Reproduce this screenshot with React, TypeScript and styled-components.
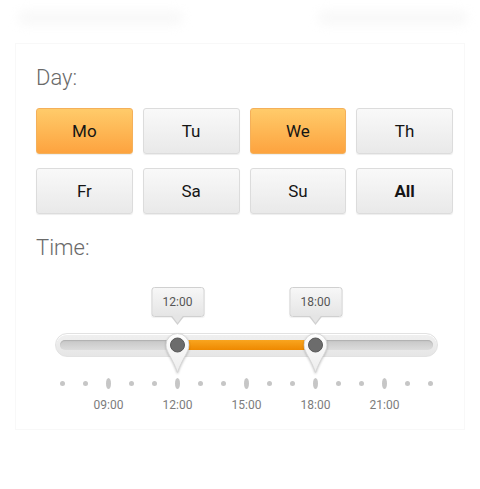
import { FC, useState } from "react";
import styled, { createGlobalStyle, css } from "styled-components";

const GlobalStyle = createGlobalStyle`
  body {
    margin: 0;
    background: #ffffff;
    font-family: Roboto, "Liberation Sans", Arial, sans-serif;
  }
`;

const FIRST_HOUR = 7;
const LAST_HOUR = 23;
const STEP = 23;
const HOURS = Array.from({ length: LAST_HOUR - FIRST_HOUR + 1 }, (_, i) => FIRST_HOUR + i);
const DAYS = ["Mo", "Tu", "We", "Th", "Fr", "Sa", "Su", "All"];

// center of an hour, measured from the left edge of the slider box
const hourX = (h: number) => STEP / 2 + (h - FIRST_HOUR) * STEP;

const Screen = styled.div`
  width: 480px;
  height: 489px;
  overflow: hidden;
  background: #fff;
`;

const Header = styled.div`
  height: 43px;
  box-sizing: border-box;
  padding: 10px 12px 0 18px;
  display: flex;
  justify-content: space-between;
  align-items: flex-start;
`;

const Blur = styled.div<{ $w: number }>`
  width: ${({ $w }) => $w}px;
  height: 16px;
  border-radius: 8px;
  background: #f9f9f9;
  filter: blur(5px);
`;

const Panel = styled.div`
  margin: 0 15px;
  height: 387px;
  box-sizing: border-box;
  border: 1px solid #f8f8f8;
  padding: 21px 20px 0 20px;
`;

const SectionLabel = styled.div<{ $gap?: number }>`
  margin-top: ${({ $gap }) => $gap ?? 0}px;
  font-size: 22px;
  line-height: 26px;
  font-weight: 300;
  color: #6a6a6a;
`;

const DayGrid = styled.div`
  margin-top: 17px;
  width: 417px;
  display: grid;
  grid-template-columns: repeat(4, 1fr);
  gap: 14px 10px;
`;

const DayButton = styled.button<{ $active: boolean; $bold?: boolean }>`
  height: 46px;
  padding: 0;
  border: 1px solid #dcdcdc;
  border-radius: 3px;
  background: linear-gradient(#f9f9f9, #e9e9e9);
  box-shadow: 0 1px 1px rgba(0, 0, 0, 0.07);
  font-family: Roboto, "Liberation Sans", Arial, sans-serif;
  font-size: 17px;
  font-weight: ${({ $bold }) => ($bold ? 700 : 400)};
  color: #151515;
  cursor: pointer;

  ${({ $active }) =>
    $active &&
    css`
      border-color: #f4b05a;
      background: linear-gradient(#ffcb6a, #fda33f);
    `}
`;

const SliderBox = styled.div`
  position: relative;
  margin: 26px 0 0 15px;
  width: ${HOURS.length * STEP}px;
  padding-top: 46px;
`;

const Track = styled.div`
  position: relative;
  margin: 0 4px;
  height: 24px;
  box-sizing: border-box;
  border: 1px solid #e2e2e2;
  border-radius: 12px;
  background: linear-gradient(#f0f0f0, #e6e6e6);
  box-shadow: inset 0 1px 0 #fff;
  padding: 6px 4px;
`;

const Groove = styled.div`
  position: relative;
  height: 10px;
  border-radius: 5px;
  background: linear-gradient(#c6c6c6, #dcdcdc);
  box-shadow: inset 0 1px 1px rgba(0, 0, 0, 0.12);
`;

const Fill = styled.div`
  position: absolute;
  top: 0;
  bottom: 0;
  background: linear-gradient(#f9a51f, #ee8900);
`;

const Handle = styled.div`
  position: absolute;
  top: 0;
  transform: translateX(-50%);
  display: flex;
  flex-direction: column;
  align-items: center;
  z-index: 2;
`;

const Bubble = styled.div`
  position: relative;
  width: 53px;
  height: 30px;
  box-sizing: border-box;
  border: 1px solid #d0d0d0;
  border-radius: 3px;
  background: linear-gradient(#f7f7f7, #e5e5e5);
  box-shadow: 0 1px 1px rgba(0, 0, 0, 0.06);
  display: flex;
  align-items: center;
  justify-content: center;
  font-size: 12px;
  color: #555;

  &::before,
  &::after {
    content: "";
    position: absolute;
    left: 50%;
    width: 0;
    height: 0;
    border-style: solid;
  }

  &::before {
    bottom: -9px;
    margin-left: -7px;
    border-width: 9px 7px 0 7px;
    border-color: #d0d0d0 transparent transparent transparent;
  }

  &::after {
    bottom: -7px;
    margin-left: -6px;
    border-width: 8px 6px 0 6px;
    border-color: #e5e5e5 transparent transparent transparent;
  }
`;

const PinSvg = styled.svg`
  margin-top: 16px;
  filter: drop-shadow(0 1px 1px rgba(0, 0, 0, 0.22));
`;

const TickRow = styled.div`
  margin-top: 21px;
  height: 11px;
  display: grid;
  grid-template-columns: repeat(${HOURS.length}, ${STEP}px);
  align-items: center;
  justify-items: center;
`;

const Tick = styled.span<{ $major: boolean }>`
  display: block;
  width: 5px;
  height: ${({ $major }) => ($major ? 11 : 5)}px;
  border-radius: 50%;
  background: #c6c6c6;
`;

const LabelRow = styled.div`
  margin-top: 9px;
  display: grid;
  grid-template-columns: repeat(${HOURS.length}, ${STEP}px);
`;

const HourLabel = styled.span<{ $start: number }>`
  grid-column: ${({ $start }) => $start} / span 3;
  text-align: center;
  font-size: 12px;
  line-height: 14px;
  color: #7c7c7c;
`;

const pad = (h: number) => `${h < 10 ? "0" : ""}${h}:00`;

const Pin: FC = () => (
  <PinSvg width="24" height="41" viewBox="0 0 24 41">
    <defs>
      <linearGradient id="pinFill" x1="0" y1="0" x2="0" y2="1">
        <stop offset="0" stopColor="#ffffff" />
        <stop offset="1" stopColor="#ececec" />
      </linearGradient>
    </defs>
    <path
      d="M12 0.5 A11.5 11.5 0 0 1 23.5 12 C23.5 19 17 25 12 39.5 C7 25 0.5 19 0.5 12 A11.5 11.5 0 0 1 12 0.5 Z"
      fill="url(#pinFill)"
      stroke="#d6d6d6"
      strokeWidth="1"
    />
    <circle cx="12" cy="12" r="7" fill="#6c6c6c" stroke="#585858" strokeWidth="1" />
  </PinSvg>
);

const App: FC = () => {
  const [active, setActive] = useState<string[]>(["Mo", "We"]);
  const [range] = useState<[number, number]>([12, 18]);

  const toggle = (d: string) =>
    setActive((prev) => (prev.includes(d) ? prev.filter((x) => x !== d) : [...prev, d]));

  // groove starts 9px into the slider box (4px margin + 1px border + 4px padding)
  const fillLeft = hourX(range[0]) - 9;
  const fillWidth = hourX(range[1]) - hourX(range[0]);

  return (
    <Screen>
      <GlobalStyle />
      <Header>
        <Blur $w={165} />
        <Blur $w={150} />
      </Header>
      <Panel>
        <SectionLabel>Day:</SectionLabel>
        <DayGrid>
          {DAYS.map((d) => (
            <DayButton
              key={d}
              $active={active.includes(d)}
              $bold={d === "All"}
              onClick={() => toggle(d)}
            >
              {d}
            </DayButton>
          ))}
        </DayGrid>

        <SectionLabel $gap={21}>Time:</SectionLabel>
        <SliderBox>
          <Track>
            <Groove>
              <Fill style={{ left: fillLeft, width: fillWidth }} />
            </Groove>
          </Track>
          {range.map((h) => (
            <Handle key={h} style={{ left: hourX(h) }}>
              <Bubble>{pad(h)}</Bubble>
              <Pin />
            </Handle>
          ))}
          <TickRow>
            {HOURS.map((h) => (
              <Tick key={h} $major={h % 3 === 0} />
            ))}
          </TickRow>
          <LabelRow>
            {HOURS.filter((h) => h % 3 === 0).map((h) => (
              <HourLabel key={h} $start={h - FIRST_HOUR}>
                {pad(h)}
              </HourLabel>
            ))}
          </LabelRow>
        </SliderBox>
      </Panel>
    </Screen>
  );
};

export default App;
